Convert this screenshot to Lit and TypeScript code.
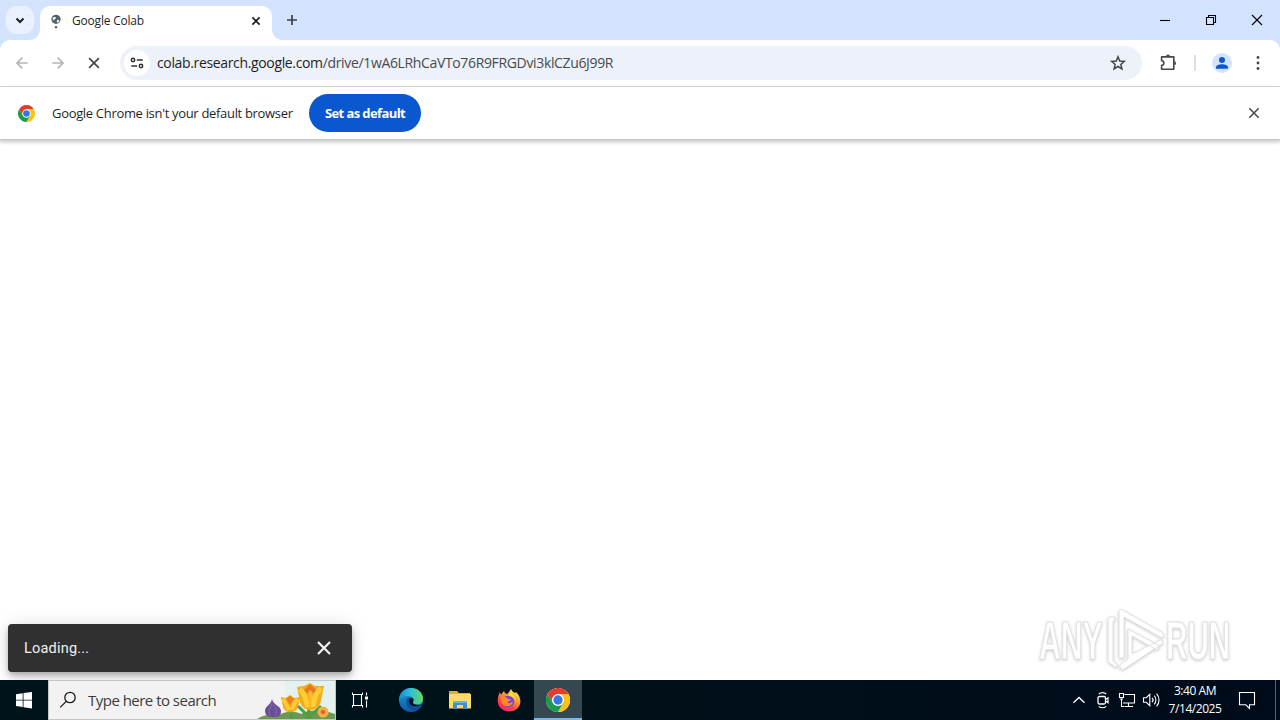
import { LitElement, html, css, svg } from "lit";
import { customElement, property } from "lit/decorators.js";

const cross = (r: number) => svg`<path d="M${10 - r} ${10 - r}L${10 + r} ${10 + r}M${10 + r} ${10 - r}L${10 - r} ${10 + r}"/>`;

const chromeLogo = html`
  <svg viewBox="0 0 48 48">
    <circle cx="24" cy="24" r="24" fill="#fff" />
    <path d="M24 12h20.8A24 24 0 0 0 3.2 12l10.4 18z" fill="#e33b2e" />
    <path d="M34.4 30 24 48A24 24 0 0 0 44.8 12H24z" fill="#fbc116" />
    <path d="M13.6 30 3.2 12A24 24 0 0 0 24 48l10.4-18z" fill="#199d4c" />
    <circle cx="24" cy="24" r="12" fill="#fff" />
    <circle cx="24" cy="24" r="9.3" fill="#3478e8" />
  </svg>
`;

@customElement("line-icon")
export class LineIcon extends LitElement {
  @property({ type: String }) name = "";

  static styles = css`
    :host {
      display: block;
      flex: none;
      width: 20px;
      height: 20px;
    }

    svg {
      display: block;
      width: 20px;
      height: 20px;
      fill: none;
      stroke: currentColor;
      stroke-width: 1.7;
    }

    .thin {
      stroke-width: 1.1;
    }

    .solid {
      fill: currentColor;
      stroke: none;
    }
  `;

  private _shape() {
    switch (this.name) {
      case "down":
        return svg`<path d="M6.5 8.5 10 12l3.5-3.5" stroke-width="2"/>`;
      case "globe":
        return svg`
          <circle cx="10" cy="8.3" r="4.6" class="solid"/>
          <path d="M6.5 7.5c1-1.9 3-1.8 3.6-.8.4 1-1.9.9-1.8 2 .1 1-1.2.6-1.8-1.2ZM11 9.3c1.2-.8 2.5-.3 2.3.4-.4 1.4-1.7 1.9-2.4 1.8-.4-.7.5-1.1.1-2.2Z" fill="#fff" stroke="none"/>
          <circle cx="10" cy="16.2" r="1.2" class="solid"/>`;
      case "tab-close":
        return svg`<g>${cross(3.6)}</g>`;
      case "plus":
        return svg`<path d="M10 5v10M5 10h10"/>`;
      case "minimize":
        return svg`<path d="M5 10.5h10" class="thin"/>`;
      case "restore":
        return svg`<path d="M5.5 7.5h7v7h-7zM7.5 7.5v-2h7v7h-2" class="thin"/>`;
      case "window-close":
        return svg`<g class="thin">${cross(5)}</g>`;
      case "back":
        return svg`<path d="M15.7 10H5M10.3 4.7 5 10l5.3 5.3"/>`;
      case "forward":
        return svg`<path d="M4.3 10H15M9.7 4.7 15 10l-5.3 5.3"/>`;
      case "stop":
        return svg`<g>${cross(4.9)}</g>`;
      case "bar-close":
        return svg`<g stroke-width="1.5">${cross(4.7)}</g>`;
      case "tune":
        return svg`
          <circle cx="6" cy="7" r="1.7" stroke-width="1.5"/>
          <circle cx="14" cy="13" r="1.7" stroke-width="1.5"/>
          <path d="M9.8 7h6M4.3 13h5.8" stroke-width="1.7"/>`;
      case "star":
        return svg`<path d="m10 3.8 1.75 4.2 4.55.4-3.45 3 1.05 4.45L10 13.5l-3.9 2.35 1.05-4.45-3.45-3L8.25 8z" stroke-width="1.5"/>`;
      case "extension":
        return svg`
          <path d="M3.6 3.9h12.2v12.3H3.600v-3.800c3 0 3-4.700 0-4.700z" stroke-linejoin="round" stroke-width="1.6"/>
          <path d="M8 3.500a2 2 0 0 1 4 0zM16.300 8a2.200 2.200 0 0 1 0 4.300z" class="solid"/>`;
      case "more":
        return svg`<g class="solid"><circle cx="10" cy="4.5" r="1.4"/><circle cx="10" cy="10" r="1.4"/><circle cx="10" cy="15.5" r="1.4"/></g>`;
      case "profile":
        return svg`
          <circle cx="10" cy="10" r="10" fill="#d3e3fd" stroke="none"/>
          <circle cx="10" cy="7" r="3" class="solid"/>
          <path d="M4 15.8v-1.3c0-2 3-3.2 6-3.2s6 1.2 6 3.2v1.3z" class="solid"/>`;
      case "windows":
        return svg`<path d="m2 4.2 6.7-1v6.5H2zM9.5 3.1 18 1.9v7.8H9.5zM2 10.5h6.7V17L2 16zM9.5 10.5H18v7.9l-8.5-1.2z" class="solid"/>`;
      case "search":
        return svg`<g stroke-width="1.3"><circle cx="12" cy="7.5" r="5.2"/><path d="m8.2 11.4-6 6"/></g>`;
      case "task-view":
        return svg`
          <path d="M2.500 2.500v2h10v-2M2.500 17.500v-2h10v2M3.500 5v10M11.500 5v10M16.500 2.500v3M16.500 10.500v7" class="thin"/>
          <path d="M15 6.500h3v3h-3z" class="solid"/>`;
      case "up":
        return svg`<path d="m4.5 12.8 5.5-5.3 5.5 5.3" stroke-width="1.3"/>`;
      case "meet":
        return svg`
          <rect x="5" y="6.500" width="7.500" height="7.500" rx="1.500" stroke-width="1.300"/>
          <path d="M12.500 9.500 15 7.800v5l-2.500-1.700M5.800 4c2-1.800 5.400-1.800 7.400 0M5.800 16.400c2 1.800 5.400 1.800 7.400 0" stroke-width="1.200"/>`;
      case "network":
        return svg`
          <path d="M7.500 4.500h10v8.500H6M11.500 13v3.500M8 16.500h8M4.500 9v7.500h3" class="thin"/>
          <path d="M2.500 3.500h4v4h-4zM3 9h3" class="thin"/>`;
      case "volume":
        return svg`<path d="M2.500 7.700h2.800l3.500-3.400v11.400l-3.500-3.400H2.500zM11 7.800c1.200 1.200 1.200 3.200 0 4.400M13.200 5.700c2.300 2.300 2.300 6.300 0 8.600M15.500 3.700c3.400 3.400 3.400 9.200 0 12.600" class="thin"/>`;
      case "notification":
        return svg`<path d="M2.500 2.500h15v12.300h-5v3.700l-3.700-3.700H2.500z" class="thin"/>`;
      default:
        return svg`<g stroke-width="2.2">${cross(6)}</g>`;
    }
  }

  render() {
    return html`<svg viewBox="0 0 20 20">${this._shape()}</svg>`;
  }
}

@customElement("browser-chrome")
export class BrowserChrome extends LitElement {
  static styles = css`
    :host {
      display: block;
      color: #1f1f1f;
      background: #d3e3fd;
    }

    .strip {
      display: flex;
      height: 40px;
      align-items: center;
      padding-left: 6px;
    }

    .tab-search {
      display: grid;
      place-items: center;
      width: 28px;
      height: 28px;
      border-radius: 10px;
      background: #e9f0fe;
    }

    .tab {
      position: relative;
      display: flex;
      align-items: center;
      align-self: flex-end;
      box-sizing: border-box;
      width: 232px;
      height: 34px;
      margin-left: 6px;
      padding: 0 6px 5px;
      border-radius: 10px 10px 0 0;
      background: #fff;
      font-size: 12px;
      letter-spacing: -0.2px;
    }

    .tab::before,
    .tab::after {
      content: "";
      position: absolute;
      bottom: 0;
      width: 10px;
      height: 10px;
    }

    .tab::before {
      left: -10px;
      background: radial-gradient(circle at 0 0, transparent 9.5px, #fff 10px);
    }

    .tab::after {
      right: -10px;
      background: radial-gradient(circle at 100% 0, transparent 9.5px, #fff 10px);
    }

    .favicon {
      color: #51626d;
    }

    .title {
      flex: 1;
      margin-left: 6px;
    }

    .new-tab {
      margin-left: 10px;
      color: #3c4043;
    }

    .window {
      display: flex;
      gap: 26px;
      margin-left: auto;
      padding-right: 13px;
      color: #000;
    }

    .toolbar {
      display: flex;
      align-items: center;
      box-sizing: border-box;
      height: 47px;
      padding: 0 12px;
      border-bottom: 1px solid #e1e3e1;
      border-radius: 10px 10px 0 0;
      background: #fff;
      color: #474747;
    }

    .nav {
      display: flex;
      gap: 16px;
    }

    .off {
      color: #b5b5b5;
    }

    .omnibox {
      display: flex;
      align-items: center;
      box-sizing: border-box;
      width: 1022px;
      height: 34px;
      margin-left: 16px;
      padding: 0 14px 0 4px;
      border-radius: 17px;
      background: #edf1fa;
    }

    .site {
      display: grid;
      place-items: center;
      width: 26px;
      height: 26px;
      border-radius: 50%;
      background: #fff;
      color: #303030;
    }

    .url {
      flex: 1;
      margin-left: 7px;
      padding-bottom: 1px;
      font-size: 14px;
      letter-spacing: -0.35px;
      color: #474b50;
    }

    .url b {
      font-weight: 400;
      color: #1f1f1f;
    }

    .actions {
      display: flex;
      align-items: center;
      gap: 16px;
      margin-left: 16px;
    }

    .rule {
      width: 2px;
      height: 16px;
      background: #dbe0ea;
    }

    .profile {
      color: #0b57d0;
    }
  `;

  render() {
    return html`
      <div class="strip">
        <div class="tab-search"><line-icon name="down"></line-icon></div>
        <div class="tab">
          <line-icon class="favicon" name="globe"></line-icon>
          <span class="title">Google Colab</span>
          <line-icon name="tab-close"></line-icon>
        </div>
        <line-icon class="new-tab" name="plus"></line-icon>
        <div class="window">
          <line-icon name="minimize"></line-icon>
          <line-icon name="restore"></line-icon>
          <line-icon name="window-close"></line-icon>
        </div>
      </div>
      <div class="toolbar">
        <div class="nav">
          <line-icon class="off" name="back"></line-icon>
          <line-icon class="off" name="forward"></line-icon>
          <line-icon name="stop"></line-icon>
        </div>
        <div class="omnibox">
          <div class="site"><line-icon name="tune"></line-icon></div>
          <span class="url"><b>colab.research.google.com</b>/drive/1wA6LRhCaVTo76R9FRGDvi3klCZu6J99R</span>
          <line-icon name="star"></line-icon>
        </div>
        <div class="actions">
          <line-icon name="extension"></line-icon>
          <div class="rule"></div>
          <line-icon class="profile" name="profile"></line-icon>
          <line-icon name="more"></line-icon>
        </div>
      </div>
    `;
  }
}

@customElement("default-bar")
export class DefaultBar extends LitElement {
  static styles = css`
    :host {
      display: flex;
      align-items: center;
      height: 52px;
      padding: 0 16px 0 18px;
      background: #fff;
      box-shadow: 0 1px 0 #c8c8c8, 0 2px 4px 1px rgba(0, 0, 0, 0.24);
      color: #1f1f1f;
      font-size: 13px;
    }

    svg {
      display: block;
      width: 17px;
      height: 17px;
    }

    .message {
      width: 241px;
      margin: 0 16px 0 17px;
      white-space: nowrap;
      letter-spacing: -0.32px;
    }

    button {
      width: 112px;
      height: 38px;
      padding: 0;
      border: none;
      border-radius: 19px;
      background: #0b57d0;
      color: #fff;
      font: 700 13px "Open Sans", "Noto Sans", sans-serif;
      letter-spacing: -0.6px;
      white-space: nowrap;
    }

    line-icon {
      margin-left: auto;
      color: #474747;
    }
  `;

  render() {
    return html`
      ${chromeLogo}
      <span class="message">Google Chrome isn't your default browser</span>
      <button>Set as default</button>
      <line-icon name="bar-close"></line-icon>
    `;
  }
}

@customElement("task-bar")
export class TaskBar extends LitElement {
  static styles = css`
    :host {
      display: flex;
      height: 40px;
      background: linear-gradient(90deg, #00141c, #001019 50%, #000b1a);
      color: #fff;
    }

    .cell {
      display: grid;
      place-items: center;
      width: 48px;
      height: 40px;
    }

    .search {
      display: flex;
      align-items: center;
      box-sizing: border-box;
      width: 288px;
      height: 40px;
      padding-left: 9px;
      border: 1px solid #c4c4c4;
      background: #f2f2f2;
      color: #1c1c1c;
    }

    .hint {
      flex: 1;
      margin-left: 10px;
      font-size: 15px;
      letter-spacing: -0.52px;
      white-space: nowrap;
      color: #3c3c3c;
    }

    .flowers {
      display: block;
      width: 80px;
      height: 38px;
    }

    .apps {
      display: flex;
      gap: 1px;
      margin-left: 3px;
    }

    .apps .cell {
      box-sizing: border-box;
    }

    .apps svg {
      display: block;
      width: 24px;
      height: 24px;
    }

    .apps .active {
      padding-top: 2px;
      border-bottom: 2px solid #76b9ed;
      background: #37474f;
    }

    .tray {
      display: flex;
      align-items: center;
      gap: 4px;
      margin-left: auto;
    }

    .clock {
      width: 60px;
      font-size: 12px;
      line-height: 18px;
      letter-spacing: -0.45px;
      text-align: center;
      white-space: nowrap;
    }

    .notice {
      margin-left: 8px;
    }

    .peek {
      width: 4px;
      height: 40px;
      margin-left: 14px;
      border-left: 1px solid #59636f;
    }
  `;

  private _flowers() {
    return html`
      <svg class="flowers" viewBox="0 0 80 38">
        <path d="M30 0h50v38H30z" fill="#d8f0ec" opacity=".6" />
        <path d="M2 38c8-5 15-5 22-4 7-4 16-4 22-1 10-5 22-4 34 0v5z" fill="#6c9851" />
        <path d="M17 18c1 6 9 7 9 12 0 6-4 6-9 6s-7-3-7-6c0-5 6-6 7-12z" fill="#6b4e98" />
        <path d="M17 22c-1 5-4 7-2 13M18 23c4 6 4 8 2 12" fill="none" stroke="#8a69ae" stroke-width="1" />
        <path d="M36 28v10M54 27l-1 11M53 37 66 25M54 36 43 25" stroke="#4e9e47" stroke-width="3" />
        <path d="m26 16 5 1 4-3 4 3 6-1-2 10c-2 7-13 7-15 0z" fill="#f6a619" />
        <path d="M28 18c2 3 4 6 6 11M43 18c-3 3-5 6-6 11" fill="none" stroke="#ffc936" stroke-width="4" />
        <path d="m31 18 4-3 4 3-4 6z" fill="#e9801d" />
        <path d="m42 6 7-1 6-3 5 3 9 0-3 15c-3 12-18 12-21 1z" fill="#f5ac19" />
        <path d="M45 8c4 4 6 10 8 18M66 7c-6 6-7 11-8 19" fill="none" stroke="#ffcd35" stroke-width="5" />
        <path d="m49 9 6-6 6 6-5 7z" fill="#e87921" />
        <path d="m53 12 2-3 3 3-2 12z" fill="#ffb92b" />
        <circle cx="68" cy="31" r="5.5" fill="#f7b047" />
        <circle cx="68" cy="31" r="2.3" fill="#d26c26" />
      </svg>
    `;
  }

  private _edge() {
    return html`
      <svg viewBox="0 0 24 24">
        <defs>
          <linearGradient id="edge-top" x1="0" x2="1">
            <stop offset="0" stop-color="#168ad5" />
            <stop offset=".5" stop-color="#2fc2d4" />
            <stop offset="1" stop-color="#68d95b" />
          </linearGradient>
          <linearGradient id="edge-side" x2="0" y2="1">
            <stop offset="0" stop-color="#1c9ce0" />
            <stop offset="1" stop-color="#0c59a8" />
          </linearGradient>
        </defs>
        <circle cx="12" cy="12" r="12" fill="url(#edge-side)" />
        <path d="M0 11C1 4 6 0 12 0c7 0 12 5 12 10.5 0 4-3 6-6 6-3 0-4.5-1.2-4-2.5 2-3-1-6-5-6-5 0-8 3-9 5z" fill="url(#edge-top)" />
        <path d="M8.5 10c-4 5 1 13 8 12.5 3-1 4.6-2.5 6-5-6 3-12 0-12.5-4 0-2 1.5-3 1.5-3-1-1-2.5-1-3-.5z" fill="#124e91" />
        <path d="M14 14c2-3-1-5-3-4-2 2-1 7 3 8 4 1 8-.5 8.5-1l1.5 2v-3c-2 1-4 1-6 .8-3 0-4.5-1.5-4-2.8z" fill="#00151e" />
      </svg>
    `;
  }

  private _explorer() {
    return html`
      <svg viewBox="0 0 24 24">
        <path d="M1 3h8l2 2h11v15H1z" fill="#e8a829" />
        <path d="M1 6h22v14.5H1z" fill="#ffd970" />
        <path d="M5 13h14v8h-4v-4H9v4H5z" fill="#3e8ed0" />
        <path d="M5 13h14v2H5z" fill="#67b3e7" />
      </svg>
    `;
  }

  private _firefox() {
    return html`
      <svg viewBox="0 0 24 24">
        <defs>
          <linearGradient id="fox" x1=".8" y1="0" x2=".2" y2="1">
            <stop offset="0" stop-color="#fff44f" />
            <stop offset=".35" stop-color="#ffa02e" />
            <stop offset=".7" stop-color="#ff4247" />
            <stop offset="1" stop-color="#e82170" />
          </linearGradient>
        </defs>
        <path d="M3 4c0 1 .5 2 1 2.5L7 3c.5 2 2 3 3 3 2-1 2.5-3 4-5 1 2 2 3 4 4l1-1c4 4 5 8 4 12-1 4-5 7.500-11 7.500S.8 19 .7 13C.6 9 2 6 3 4z" fill="url(#fox)" />
        <path d="M7 9c3-2 9-1 10 3 1 5-3 7-6 7-4 0-6-4-4-8z" fill="#7543e5" />
        <path d="M4 9c3-1 5 0 7 2l3 .5c-1 2-3 1.5-3.5 3 2 1.5 4 0 5.5-1-1 5-7 6-10 3-2-2-3-5-2-7.5z" fill="#ff8a28" />
        <path d="M14 3c1 4 5 5 5 10-1-3-4-5-7-5 0-2 1-4 2-5z" fill="#ffdd3f" />
      </svg>
    `;
  }

  render() {
    return html`
      <div class="cell"><line-icon name="windows"></line-icon></div>
      <div class="search">
        <line-icon name="search"></line-icon>
        <span class="hint">Type here to search</span>
        ${this._flowers()}
      </div>
      <div class="cell"><line-icon name="task-view"></line-icon></div>
      <div class="apps">
        <div class="cell">${this._edge()}</div>
        <div class="cell">${this._explorer()}</div>
        <div class="cell">${this._firefox()}</div>
        <div class="cell active">${chromeLogo}</div>
      </div>
      <div class="tray">
        <line-icon name="up"></line-icon>
        <line-icon name="meet"></line-icon>
        <line-icon name="network"></line-icon>
        <line-icon name="volume"></line-icon>
        <div class="clock">3:40 AM<br />7/14/2025</div>
        <line-icon class="notice" name="notification"></line-icon>
        <div class="peek"></div>
      </div>
    `;
  }
}

@customElement("app-root")
export class AppRoot extends LitElement {
  static styles = css`
    :host {
      position: relative;
      display: flex;
      flex-direction: column;
      width: 1280px;
      height: 720px;
      overflow: hidden;
      background: #fff;
      font-family: "Open Sans", "Noto Sans", sans-serif;
    }

    main {
      flex: 1;
    }

    .toast {
      position: absolute;
      left: 8px;
      bottom: 48px;
      display: flex;
      align-items: center;
      justify-content: space-between;
      box-sizing: border-box;
      width: 344px;
      height: 48px;
      padding: 0 18px 0 16px;
      border-radius: 4px;
      background: #303030;
      box-shadow: 0 3px 5px -1px rgba(0, 0, 0, 0.2), 0 6px 10px rgba(0, 0, 0, 0.14), 0 1px 18px rgba(0, 0, 0, 0.12);
      color: #f2f2f2;
      font-family: Roboto, "Liberation Sans", sans-serif;
      font-size: 14.5px;
      letter-spacing: 0.2px;
    }

    .watermark {
      position: absolute;
      right: 40px;
      bottom: 40px;
      width: 210px;
      height: 80px;
      fill: #fff;
      stroke: #e0e0e0;
      stroke-width: 1;
      font: 700 53px "Liberation Sans", sans-serif;
      filter: drop-shadow(0 1px 1.5px rgba(0, 0, 0, 0.2));
    }

    .watermark text {
      vector-effect: non-scaling-stroke;
    }

    task-bar {
      position: relative;
    }
  `;

  render() {
    return html`
      <browser-chrome></browser-chrome>
      <default-bar></default-bar>
      <main></main>
      <svg class="watermark" viewBox="0 0 210 80">
        <text transform="translate(9 59) scale(.57 1)">ANY</text>
        <path d="M78 19q0-2 2-2h5v4h-2v40l4 3v4l-9-6z" />
        <path d="M89 12q0-4 4-2l40 23q2 2-1 5L94 17v41h-5z" />
        <path d="m98 29 32 17-3 4-25-14v18l28-14q4 0 2 4l-38 25q-3 2-4-2-1-2 2-4l6-4z" />
        <text transform="translate(136 59) scale(.56 1)">RUN</text>
      </svg>
      <div class="toast">
        <span>Loading...</span>
        <line-icon name="toast-close"></line-icon>
      </div>
      <task-bar></task-bar>
    `;
  }
}
